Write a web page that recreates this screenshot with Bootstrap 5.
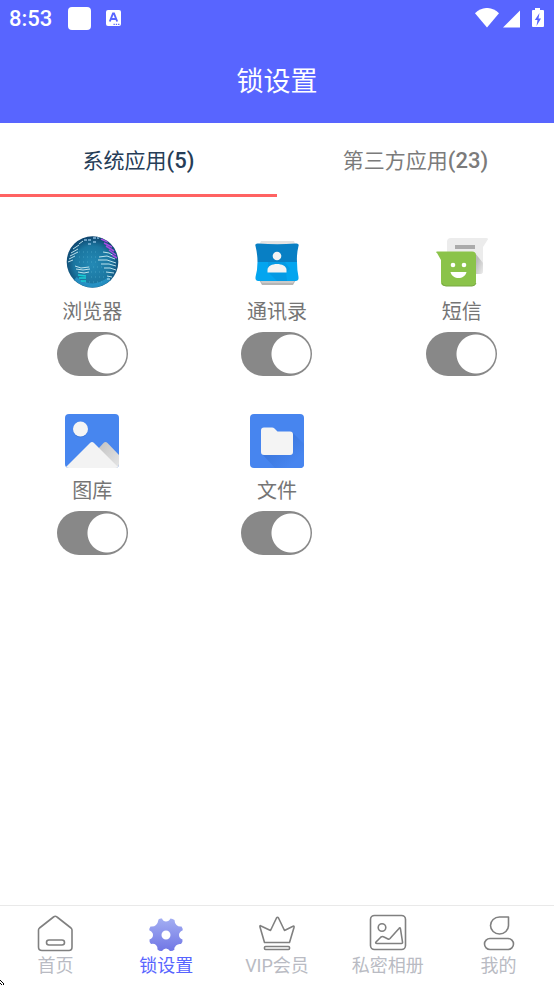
<!DOCTYPE html>
<html lang="zh-CN">
<head>
<meta charset="utf-8">
<meta name="viewport" content="width=device-width, initial-scale=1">
<title>锁设置</title>
<link href="https://cdn.jsdelivr.net/npm/bootstrap@5.3.0/dist/css/bootstrap.min.css" rel="stylesheet">
<style>
body{font-family:Roboto,"Noto Sans CJK SC",sans-serif;background:#fff;color:#7a7a7a}
svg{display:block;flex:none}
.app-head{background:#5865ff;color:#fff}
.status-row{height:38px;padding:0 9px}
.clock{font-size:22px;line-height:38px;font-weight:500}
.notice-icon{margin-left:14px}
.page-title{font-size:27px;line-height:40px;padding:24px 0 21px;font-weight:400}
.tab-btn{font-size:21px;line-height:32px;font-weight:400;padding:22px 0 17px;border:0;border-bottom:3px solid transparent;background:none;color:#7b7b7b}
.tab-btn.active{color:#263d57;border-color:#ff6262}
.tab-count{font-size:22px;font-weight:500}
.app-grid{padding-top:38px;row-gap:38px}
.app-name{font-size:20px;line-height:30px;margin:8px 0 5px;color:#757575}
.app-item .lock-switch{width:71px;height:44px;margin:0;border:0;border-radius:22px;background:#888 radial-gradient(circle at 50px 22px,#fff 19px,#888 20px) no-repeat;box-shadow:none;cursor:pointer}
.bottom-nav{border-top:1px solid #e9e9e9;height:80px;padding-top:8px}
.nav-tab{font-size:18px;line-height:28px;color:#b9bbc3;text-decoration:none}
.nav-tab.active{color:#5865ff}
.line-icon{fill:none;stroke:#808080;stroke-width:1.6;stroke-linejoin:round;stroke-linecap:round}
.pointer{left:0;bottom:0}
</style>
<script src="https://cdn.jsdelivr.net/npm/bootstrap@5.3.0/dist/js/bootstrap.bundle.min.js"></script>
</head>
<body>
<div class="d-flex flex-column min-vh-100 position-relative">
<header class="app-head">
  <div class="status-row d-flex align-items-center">
    <span class="clock">8:53</span>
    <svg class="ms-3" width="24" height="24"><rect width="23" height="23" rx="4" fill="#fff"/></svg>
    <svg class="notice-icon" width="15" height="18"><rect width="15" height="16" rx="2" fill="#fff"/><path d="M3.800 11.500 7 3.500h1l3.200 8M5 9h5" fill="none" stroke="#5865ff" stroke-width="1.900"/><path d="M7.500 14.300h1.300m1 0h1.300m1 0h1.300" stroke="#5865ff" stroke-width="1.200"/></svg>
    <svg class="ms-auto" width="70" height="22" fill="#fff"><path d="M0 5.300C7-1.800 17-1.800 24 5.300L12 19.500Z"/><path d="M28 19.500 45 2.500V19.500Z"/><path d="M60 0h5v2h3q1 0 1 1v15q0 1-1 1H58q-1 0-1-1V3q0-1 1-1h2Z"/><path d="m64.500 5-4.700 7h2.700l-1 6 4.500-7.500h-2.500l1-5.500Z" fill="#5865ff"/></svg>
  </div>
  <h1 class="page-title text-center m-0">锁设置</h1>
</header>
<div class="d-flex" role="tablist">
  <button class="tab-btn active w-50" type="button" role="tab" aria-selected="true">系统应用<span class="tab-count">(5)</span></button>
  <button class="tab-btn w-50" type="button" role="tab" aria-selected="false">第三方应用<span class="tab-count">(23)</span></button>
</div>
<main class="flex-grow-1">
  <div class="row g-0 app-grid">
    <div class="app-item col-4 d-flex flex-column align-items-center">
      <svg width="54" height="54" viewBox="0 0 54 54">
        <defs><radialGradient id="globe" cx=".5" cy=".55" r=".55"><stop stop-color="#2389b5"/><stop offset=".65" stop-color="#1b76a0"/><stop offset="1" stop-color="#0d426b"/></radialGradient><clipPath id="disc"><circle cx="27.500" cy="27" r="25.500"/></clipPath></defs>
        <circle cx="27.500" cy="27" r="25.800" fill="url(#globe)"/>
        <g clip-path="url(#disc)" fill="none">
          <path d="M10 44Q27 58 45 44" stroke="#2b9fd6" stroke-width="5" opacity=".7"/>
          <g stroke="#64bdd8" stroke-width="1" stroke-dasharray="1 3" opacity=".5"><path d="M14 17h20M14 22h19M14 27h18M24 32h14M26 37h13M26 42h14M20 47h19"/></g>
          <g stroke="#cfeef5" stroke-width=".9"><path d="m8 14 6-4m-8 8 7-4M5 21l8-4M4 24l6-3M3 27l5-2M14 9l4-3"/><path d="m10 31 6 2 8-1M11 34l7 1 7-1M13 37l6 1 5-1"/><path d="m38 17 6 1 5 3M34 22l8-1 8 3M33 25l9 0 9 3M36 29l8 0 7 2M39 33l6 0 6 2M41 37l8 1M42 41l5 1M42 44l3 0"/></g>
          <g stroke="#86b9dc" stroke-width="2.200" opacity=".75" stroke-dasharray="3 1"><path d="M19 5h8M28 3h6M23 9h3M28 7h3"/></g>
          <path d="m13 40 8 1m-7 2 7 0m-5 3 5 0" stroke="#18cfd5" stroke-width="1.400"/>
          <path d="m36 4 7 3m-4 1 8 4m-6-1 8 5m-5-1 7 5m-4 0 5 3" stroke="#a64be2" stroke-width="1.500"/>
        </g>
      </svg>
      <label class="app-name" for="s1">浏览器</label>
      <input class="form-check-input lock-switch" type="checkbox" role="switch" id="s1" checked>
    </div>
    <div class="app-item col-4 d-flex flex-column align-items-center">
      <svg width="54" height="54" viewBox="0 0 54 54"><path d="M11 6h33l3 8H7Z" fill="#e3e3e3"/><path d="M8 43h39l-4 7H12Z" fill="#b5b5b5"/><path d="M9 43h37l-3 5H12Z" fill="#cacaca"/>
      <path d="M5.500 11q-1-3 3-2.500 19 1.500 37 0 4-.5 3 2.500-2 8-1.500 16H7.500q0-8-2-16Z" fill="#087fc4"/><path d="M7.500 27H47q0 8 1.500 15 .5 4-3 4h-37q-3.500 0-3-4 2-7 2-15Z" fill="#03a5ef"/><path d="m18 37 9 9h10l-1-9 4-3-5-7H18Z" fill="#049ae4"/><circle cx="27" cy="21" r="4.300" fill="#f3f3f3"/><path d="M17.500 37.500V35c0-8 19-8 19 0v2.500Z" fill="#f3f3f3"/></svg>
      <label class="app-name" for="s2">通讯录</label>
      <input class="form-check-input lock-switch" type="checkbox" role="switch" id="s2" checked>
    </div>
    <div class="app-item col-4 d-flex flex-column align-items-center">
      <svg width="54" height="54" viewBox="0 0 54 54"><defs><linearGradient id="sh" x2="1" y2="1"><stop offset=".3" stop-color="#bbb"/><stop offset="1" stop-color="#ededed"/></linearGradient></defs><path d="M16 3h35q3 0 1.500 2L48 12v24q0 3-3 3H12V7q0-4 4-4Z" fill="#ececec"/><path d="m40 18 8 10v8q0 3-3 3h-5Z" fill="url(#sh)"/><path d="M20 10h20v4H20Z" fill="#ababab"/><path d="M2 18q-2-1.500 0-1.500h35q4 0 4 4V47q0 4-4 4H10q-4 0-4-4V25Z" fill="#8bc34a"/><path d="M7 48q1 3 4 3h26q3 0 4-3" fill="none" stroke="#78a942"/><circle cx="18" cy="30" r="2.300" fill="#fff"/><circle cx="29" cy="30" r="2.300" fill="#fff"/><path d="M15.500 37h16c-2 8-14 8-16 0Z" fill="#fff"/></svg>
      <label class="app-name" for="s3">短信</label>
      <input class="form-check-input lock-switch" type="checkbox" role="switch" id="s3" checked>
    </div>
    <div class="app-item col-4 d-flex flex-column align-items-center">
      <svg width="54" height="54" viewBox="0 0 54 54"><defs><clipPath id="sq"><rect width="54" height="54" rx="4"/></clipPath><linearGradient id="mt" x2="1" y2="1"><stop stop-color="#c2c2c2"/><stop offset="1" stop-color="#e5e5e5"/></linearGradient></defs><g clip-path="url(#sq)"><path d="M0 0h54v54H0Z" fill="#4786ef"/><circle cx="15.500" cy="16" r="7.500" fill="#3673d2" opacity=".6"/><circle cx="15.500" cy="15" r="7.500" fill="#f5f5f5"/><path d="m33 35 5.500-6q2-2 4 0L54 41v13H45Z" fill="url(#mt)"/><path d="M0 54 25 29q2-2 4 0l25 25Z" fill="#f3f3f3"/></g></svg>
      <label class="app-name" for="s4">图库</label>
      <input class="form-check-input lock-switch" type="checkbox" role="switch" id="s4" checked>
    </div>
    <div class="app-item col-4 d-flex flex-column align-items-center">
      <svg width="54" height="54" viewBox="0 0 54 54"><defs><linearGradient id="fs" x2="1" y2="1"><stop offset=".3" stop-color="#3b76dc"/><stop offset=".8" stop-color="#4785ef"/></linearGradient></defs><rect width="54" height="54" rx="4" fill="#4785ef"/><path d="m42 18 12 12v20q0 4-4 4H25L12 40Z" fill="url(#fs)"/><path d="M14 13.500h8q1.500 0 2.500 1l3 3H40q3 0 3 3V38q0 3-3 3H14q-3 0-3-3V16.500q0-3 3-3Z" fill="#f4f4f4"/></svg>
      <label class="app-name" for="s5">文件</label>
      <input class="form-check-input lock-switch" type="checkbox" role="switch" id="s5" checked>
    </div>
  </div>
</main>
<nav class="bottom-nav d-flex">
  <a href="#" class="nav-tab col d-flex flex-column align-items-center"><svg class="line-icon" width="38" height="38"><path d="m17.500 3-14 11q-1 1-1 2V33q0 3.500 3.500 3.500h27q3 0 3-3.500V16q0-1-1-2L21 3q-1.700-1.400-3.500 0Z"/><rect x="10.500" y="26" width="18" height="5" rx="2.500"/></svg>首页</a>
  <a href="#" class="nav-tab active col d-flex flex-column align-items-center" aria-current="page"><svg width="38" height="38"><defs><linearGradient id="gear" x2="0" y2="1"><stop stop-color="#a3aef2"/><stop offset="1" stop-color="#7076e5"/></linearGradient></defs><path d="M11.500 5.500Q13 4 15 4.500 16 7.500 19 7.500T23.500 4.500Q25.500 4.500 27.500 6 27.500 9 29.500 11T34.500 12.500Q36 14.500 35.500 16.500 32 18 32 21T35.500 25.500Q36 28 34 30 31 29.500 29 31.500T27.500 35.500Q25.500 37.500 23 37 21.500 34.500 19 34.500T15 37Q12.500 37.500 10.500 35.500 11 33 9 31T4 30Q2 28 2.500 25.500 6 24 6 21T2.500 16.500Q2 14.500 3.500 12.500 7 13 9 11T11.500 5.500ZM19 16.500a4.500 4.500 0 1 0 0 9 4.500 4.500 0 0 0 0-9Z" fill="url(#gear)" fill-rule="evenodd"/></svg>锁设置</a>
  <a href="#" class="nav-tab col d-flex flex-column align-items-center"><svg class="line-icon" width="38" height="38"><path d="M6.500 28.500 2 13q-.5-2 1-1l9.500 4.500 6-12.500q1-1.500 2 0l6 12.500 8-4q2-1 1.500 1L31.500 28.500Z"/><rect x="6.500" y="32.500" width="25" height="3" rx="1"/></svg>VIP会员</a>
  <a href="#" class="nav-tab col d-flex flex-column align-items-center"><svg class="line-icon" width="38" height="38"><rect x="1.500" y="1.500" width="35" height="34" rx="4"/><circle cx="13" cy="13.500" r="3.800"/><path d="m7 28 5-5q1.500-1 3 0l4 2q1 .5 2-.500L30 14.500q1-1.500 1.500.500l2 13q.2 1.500-1 1.500H8q-2 0-1-1.500Z"/></svg>私密相册</a>
  <a href="#" class="nav-tab col d-flex flex-column align-items-center"><svg class="line-icon" width="38" height="38"><path d="M28.500 3v8.500A9 8.500 0 1 1 19.500 3Z"/><rect x="4.500" y="24.500" width="29" height="11" rx="5.500"/></svg>我的</a>
</nav>
<svg class="pointer position-absolute" width="5" height="5" aria-hidden="true"><path d="M0 0h1v1H0Zm1 1h1v1H1Zm1 1h1v1H2Zm1 1h1v1H3Zm-3 0h1v1H0Zm1 1h1v1H1Zm2 0h1v1H3Z"/></svg>
</div>
</body>
</html>
